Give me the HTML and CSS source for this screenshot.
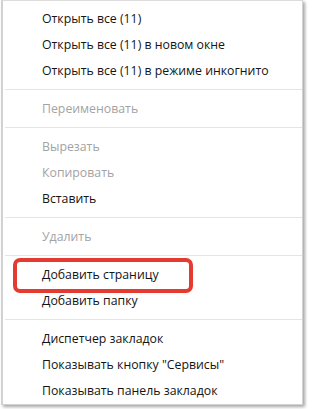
FILE: index.html
```html
<!DOCTYPE html>
<html lang="ru">
<head>
<meta charset="utf-8">
<link rel="stylesheet" href="styles.css">
</head>
<body>
<div class="menu">
  <div class="item">Открыть все (11)</div>
  <div class="item">Открыть все (11) в новом окне</div>
  <div class="item">Открыть все (11) в режиме инкогнито</div>
  <div class="sep"></div>
  <div class="item disabled">Переименовать</div>
  <div class="sep"></div>
  <div class="item disabled">Вырезать</div>
  <div class="item disabled">Копировать</div>
  <div class="item">Вставить</div>
  <div class="sep"></div>
  <div class="item disabled">Удалить</div>
  <div class="sep"></div>
  <div class="item marked">Добавить страницу<span class="highlight"></span></div>
  <div class="item">Добавить папку</div>
  <div class="sep"></div>
  <div class="item">Диспетчер закладок</div>
  <div class="item">Показывать кнопку "Сервисы"</div>
  <div class="item">Показывать панель закладок</div>
</div>
</body>
</html>
```
FILE: styles.css
```css
html, body {
  margin: 0;
  padding: 0;
  background: #ffffff;
}
body {
  width: 308px;
  height: 409px;
  overflow: hidden;
}
.menu {
  box-sizing: border-box;
  width: 302px;
  margin-left: 1px;
  padding: 5px 0 0 0;
  background: #ffffff;
  border: 1px solid #d2d2d2;
  border-left-width: 2px;
  border-top-color: #dcdcdc;
  box-shadow: 2px 2px 3px rgba(0, 0, 0, 0.35);
  font-family: "Open Sans", "Noto Sans", sans-serif;
  font-size: 12.3px;
  color: #141414;
}
.item {
  position: relative;
  height: 26px;
  line-height: 26px;
  padding-left: 39px;
  white-space: nowrap;
}
.item.disabled {
  color: #a3a3a3;
}
.sep {
  height: 12px;
  box-sizing: border-box;
  margin-left: 2px;
  padding-top: 5px;
}
.sep::before {
  content: "";
  display: block;
  height: 1px;
  background: #e5e5e5;
}
.highlight {
  position: absolute;
  left: 10px;
  top: -4px;
  width: 172px;
  height: 27px;
  border: 4px solid #e53a2f;
  border-radius: 7px;
  pointer-events: none;
}
```
